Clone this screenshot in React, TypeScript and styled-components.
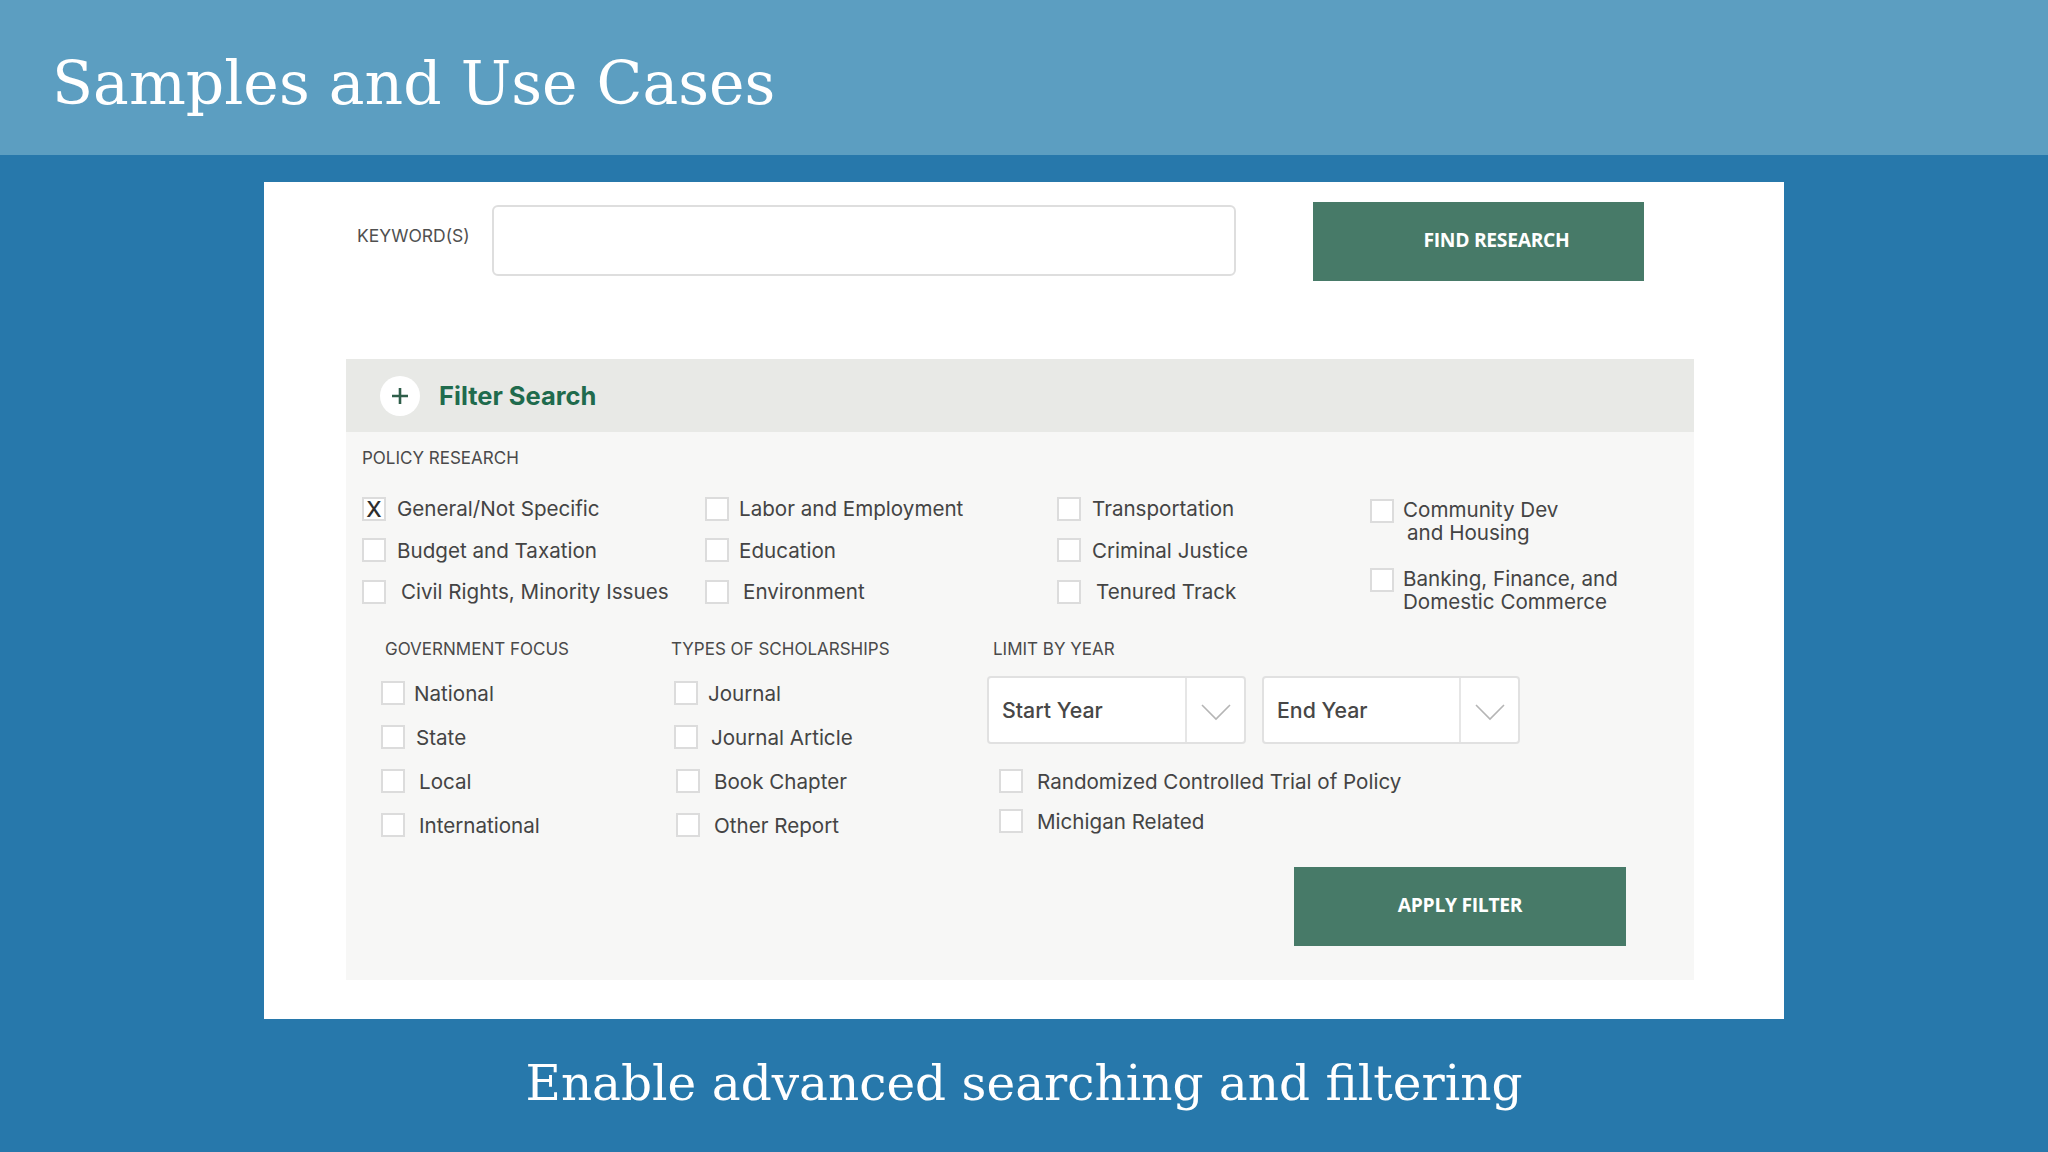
import React from "react";
import styled, { createGlobalStyle } from "styled-components";

const Global = createGlobalStyle`
  html, body { margin: 0; padding: 0; }
  body { background: #2778ab; font-family: Inter, "Noto Sans", sans-serif; }
  * { box-sizing: border-box; }
`;

const Page = styled.div`
  width: 2048px;
  height: 1152px;
  display: flex;
  flex-direction: column;
  background: #2778ab;
  overflow: hidden;
`;

const Header = styled.header`
  height: 155px;
  flex: none;
  background: #5c9ec1;
  display: flex;
  align-items: center;
  padding: 10px 0 0 52px;
`;

const Title = styled.h1`
  margin: 0;
  font-family: "DejaVu Serif", "Liberation Serif", serif;
  font-weight: 400;
  font-size: 60px;
  color: #ffffff;
  letter-spacing: 0;
`;

const Main = styled.main`
  flex: none;
  display: flex;
  justify-content: center;
  padding-top: 27px;
`;

const Card = styled.section`
  width: 1520px;
  height: 837px;
  background: #ffffff;
  padding: 20px 0 0 82px;
`;

const TopRow = styled.div`
  display: flex;
  align-items: flex-start;
  padding-left: 11px;
`;

const KeywordLabel = styled.label`
  width: 135px;
  margin-top: 24px;
  font-size: 17.5px;
  line-height: 20px;
  color: #505050;
`;

const KeywordInput = styled.input`
  width: 744px;
  height: 71px;
  margin-top: 3px;
  border: 2px solid #dedede;
  border-radius: 6px;
  background: #fff;
  outline: none;
`;

const GreenButton = styled.button<{ $offset?: number }>`
  width: ${(p) => (p.$offset ? 331 : 332)}px;
  height: 79px;
  border: none;
  background: #477a68;
  color: #ffffff;
  font-family: "Open Sans", "Noto Sans", sans-serif;
  font-weight: 700;
  font-size: 19.3px;
  letter-spacing: -0.3px;
  padding: 0 0 4px ${(p) => p.$offset ?? 0}px;
  cursor: pointer;
`;

const FindButton = styled(GreenButton)`
  margin-left: 77px;
`;

const Panel = styled.div`
  margin-top: 78px;
  width: 1348px;
`;

const PanelHeader = styled.div`
  height: 73px;
  background: #e8e9e6;
  display: flex;
  align-items: center;
  padding-left: 34px;
  gap: 19px;
`;

const PlusCircle = styled.span`
  width: 40px;
  height: 40px;
  border-radius: 50%;
  background: #ffffff;
  display: flex;
  align-items: center;
  justify-content: center;
`;

const FilterTitle = styled.span`
  font-weight: 700;
  font-size: 25.5px;
  color: #1f6b4d;
`;

const PanelBody = styled.div`
  height: 548px;
  background: #f7f7f6;
  padding: 16px 0 0 16px;
`;

const SectionLabel = styled.div<{ $indent?: number }>`
  font-size: 17px;
  line-height: 20px;
  color: #4a4a4a;
  text-transform: uppercase;
  padding-left: ${(p) => p.$indent ?? 0}px;
  white-space: nowrap;
`;

const PolicyColumns = styled.div`
  display: flex;
  margin-top: 20px;
`;

const Column = styled.div<{ $width?: number; $left?: number }>`
  display: flex;
  flex-direction: column;
  width: ${(p) => (p.$width ? `${p.$width}px` : "auto")};
  margin-left: ${(p) => p.$left ?? 0}px;
`;

const Item = styled.label<{ $h: number }>`
  display: flex;
  align-items: center;
  height: ${(p) => p.$h}px;
`;

const MultiItem = styled.label<{ $top: number }>`
  display: flex;
  align-items: flex-start;
  margin-top: ${(p) => p.$top}px;
`;

const Box = styled.span`
  flex: none;
  width: 24px;
  height: 24px;
  border: 2px solid #dcdcdc;
  background: #ffffff;
  display: flex;
  align-items: center;
  justify-content: center;
  font-size: 22px;
  font-weight: 500;
  color: #2e2e2e;
  line-height: 1;
`;

const Text = styled.span<{ $gap: number }>`
  margin-left: ${(p) => p.$gap}px;
  font-size: 20.6px;
  color: #444444;
  white-space: nowrap;
`;

const MultiText = styled.span<{ $gap: number }>`
  margin-left: ${(p) => p.$gap}px;
  margin-top: -1px;
  display: flex;
  flex-direction: column;
  font-size: 20.6px;
  line-height: 23px;
  color: #444444;
`;

const Line = styled.span<{ $indent?: number }>`
  padding-left: ${(p) => p.$indent ?? 0}px;
  white-space: nowrap;
`;

const LowerRow = styled.div`
  display: flex;
  margin-top: 26px;
`;

const LowerList = styled.div`
  display: flex;
  flex-direction: column;
  margin-top: 12px;
`;

const SelectRow = styled.div`
  display: flex;
  gap: 16px;
  margin-top: 17px;
`;

const Select = styled.div<{ $w: number }>`
  width: ${(p) => p.$w}px;
  height: 68px;
  background: #ffffff;
  border: 2px solid #e1e1e1;
  border-radius: 4px;
  display: flex;
  align-items: stretch;
`;

const SelectValue = styled.span`
  flex: 1;
  display: flex;
  align-items: center;
  padding-left: 13px;
  font-size: 21.3px;
  font-weight: 500;
  color: #474747;
`;

const SelectArrow = styled.span`
  width: 59px;
  border-left: 2px solid #e6e6e6;
  display: flex;
  align-items: center;
  justify-content: center;
  padding-top: 4px;
`;

const ExtraList = styled.div`
  display: flex;
  flex-direction: column;
  margin-top: 17px;
  padding-left: 12px;
`;

const ApplyRow = styled.div`
  display: flex;
  margin-top: 20px;
  padding-left: 932px;
`;

const Caption = styled.footer`
  flex: 1;
  display: flex;
  align-items: center;
  justify-content: center;
  font-family: "DejaVu Serif", "Liberation Serif", serif;
  font-size: 48.5px;
  color: #ffffff;
  padding-bottom: 6px;
`;

type Opt = { label: string; gap: number; checked?: boolean };

const Check = ({ label, gap, checked, h }: Opt & { h: number }) => (
  <Item $h={h}>
    <Box>{checked ? "X" : null}</Box>
    <Text $gap={gap}>{label}</Text>
  </Item>
);

const Chevron = () => (
  <svg width="30" height="17" viewBox="0 0 30 17" fill="none">
    <polyline points="1,1 15,15 29,1" stroke="#b5b5b5" strokeWidth="1.6" />
  </svg>
);

const col1: Opt[] = [
  { label: "General/Not Specific", gap: 11, checked: true },
  { label: "Budget and Taxation", gap: 11 },
  { label: "Civil Rights, Minority Issues", gap: 15 },
];
const col2: Opt[] = [
  { label: "Labor and Employment", gap: 10 },
  { label: "Education", gap: 10 },
  { label: "Environment", gap: 14 },
];
const col3: Opt[] = [
  { label: "Transportation", gap: 11 },
  { label: "Criminal Justice", gap: 11 },
  { label: "Tenured Track", gap: 15 },
];
const gov: Opt[] = [
  { label: "National", gap: 9 },
  { label: "State", gap: 11 },
  { label: "Local", gap: 14 },
  { label: "International", gap: 14 },
];
const scholar: Opt[] = [
  { label: "Journal", gap: 10 },
  { label: "Journal Article", gap: 13 },
  { label: "Book Chapter", gap: 14 },
  { label: "Other Report", gap: 14 },
];

export default function App() {
  return (
    <Page>
      <Global />
      <Header>
        <Title>Samples and Use Cases</Title>
      </Header>
      <Main>
        <Card>
          <TopRow>
            <KeywordLabel>KEYWORD(S)</KeywordLabel>
            <KeywordInput />
            <FindButton $offset={36}>FIND RESEARCH</FindButton>
          </TopRow>
          <Panel>
            <PanelHeader>
              <PlusCircle>
                <svg width="18" height="18" viewBox="0 0 18 18">
                  <path d="M9 1v16M1 9h16" stroke="#2f5e4a" strokeWidth="2.6" />
                </svg>
              </PlusCircle>
              <FilterTitle>Filter Search</FilterTitle>
            </PanelHeader>
            <PanelBody>
              <SectionLabel>Policy Research</SectionLabel>
              <PolicyColumns>
                <Column $width={343}>
                  {col1.map((o) => (
                    <Check key={o.label} {...o} h={41.5} />
                  ))}
                </Column>
                <Column $width={352}>
                  {col2.map((o) => (
                    <Check key={o.label} {...o} h={41.5} />
                  ))}
                </Column>
                <Column $width={313}>
                  {col3.map((o) => (
                    <Check key={o.label} {...o} h={41.5} />
                  ))}
                </Column>
                <Column>
                  <MultiItem $top={11}>
                    <Box />
                    <MultiText $gap={9}>
                      <Line>Community Dev</Line>
                      <Line $indent={4}>and Housing</Line>
                    </MultiText>
                  </MultiItem>
                  <MultiItem $top={24}>
                    <Box />
                    <MultiText $gap={9}>
                      <Line>Banking, Finance, and</Line>
                      <Line>Domestic Commerce</Line>
                    </MultiText>
                  </MultiItem>
                </Column>
              </PolicyColumns>
              <LowerRow>
                <Column $width={290} $left={19}>
                  <SectionLabel $indent={4}>Government Focus</SectionLabel>
                  <LowerList>
                    {gov.map((o) => (
                      <Check key={o.label} {...o} h={44} />
                    ))}
                  </LowerList>
                </Column>
                <Column $width={316}>
                  <SectionLabel>Types of Scholarships</SectionLabel>
                  <LowerList>
                    {scholar.map((o, i) => (
                      <Column key={o.label} $left={i < 2 ? 3 : 5}>
                        <Check {...o} h={44} />
                      </Column>
                    ))}
                  </LowerList>
                </Column>
                <Column>
                  <SectionLabel $indent={6}>Limit by Year</SectionLabel>
                  <SelectRow>
                    <Select $w={259}>
                      <SelectValue>Start Year</SelectValue>
                      <SelectArrow>
                        <Chevron />
                      </SelectArrow>
                    </Select>
                    <Select $w={258}>
                      <SelectValue>End Year</SelectValue>
                      <SelectArrow>
                        <Chevron />
                      </SelectArrow>
                    </Select>
                  </SelectRow>
                  <ExtraList>
                    <Check label="Randomized Controlled Trial of Policy" gap={14} h={40} />
                    <Check label="Michigan Related" gap={14} h={40} />
                  </ExtraList>
                </Column>
              </LowerRow>
              <ApplyRow>
                <GreenButton>APPLY FILTER</GreenButton>
              </ApplyRow>
            </PanelBody>
          </Panel>
        </Card>
      </Main>
      <Caption>Enable advanced searching and filtering</Caption>
    </Page>
  );
}
